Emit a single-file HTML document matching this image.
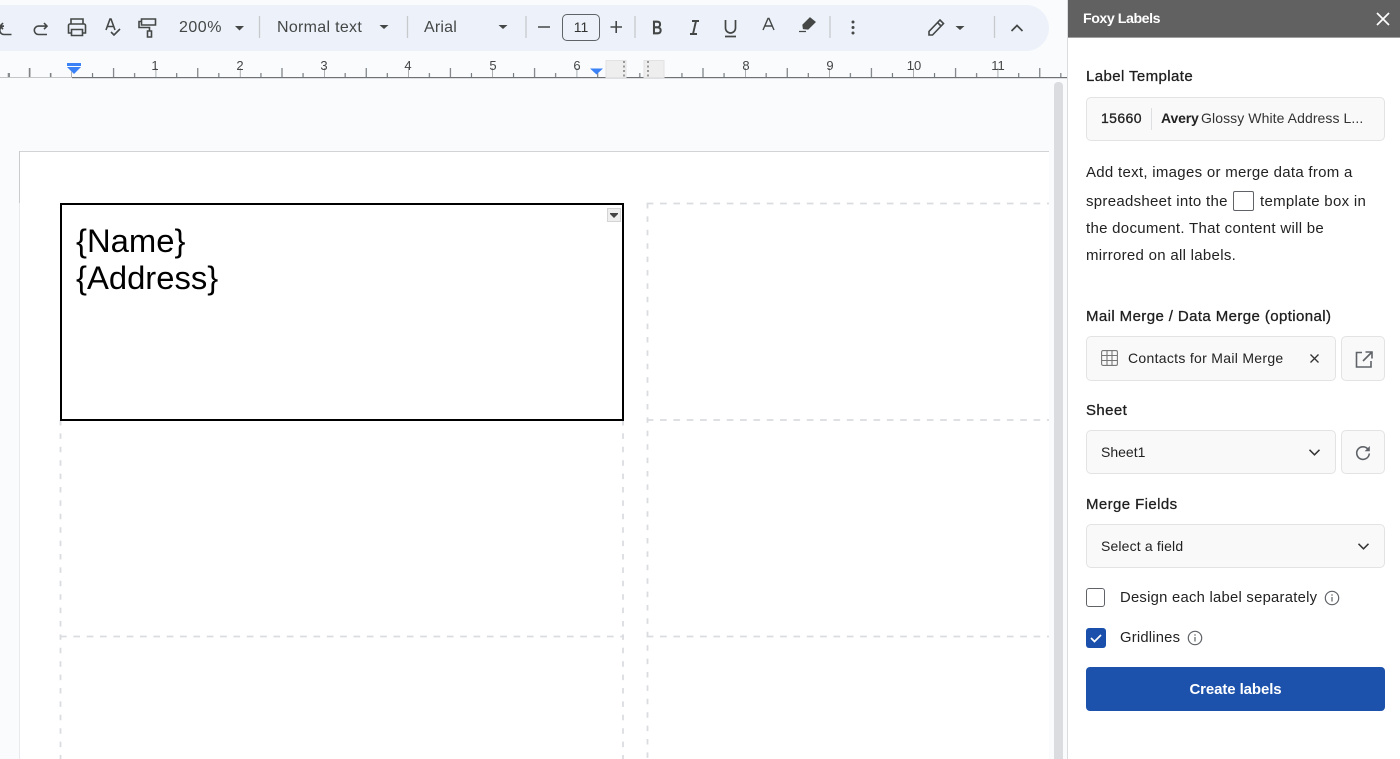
<!DOCTYPE html>
<html><head><meta charset="utf-8"><style>
html,body{margin:0;padding:0;background:#f9fbfd}
body{width:1400px;height:759px;position:relative;overflow:hidden;font-family:"Liberation Sans",Arial,sans-serif;color:#202124}
.t{position:absolute;white-space:nowrap;line-height:20px}
.b{position:absolute;box-sizing:border-box;background:#f9f9f9;border:1.5px solid #e3e3e3;border-radius:5px}
svg{position:absolute;overflow:visible}
.lbl{font-size:15px;letter-spacing:.4px;color:#1f1f1f;-webkit-text-stroke:.3px #1f1f1f}
.s{font-size:15px;letter-spacing:.29px;color:#222}
.c{font-size:14px;color:#222}
.tb{font-size:16px;letter-spacing:.2px;color:#444746}
.r{font-size:13px;color:#444746;line-height:14px;position:absolute;width:24px;text-align:center}
</style></head><body>
<!-- toolbar -->
<div style="position:absolute;left:-30px;top:5px;width:1079px;height:46px;background:#edf2fa;border-radius:23px"></div>
<svg style="left:0;top:0" width="1060" height="52" fill="none" stroke="#444746" stroke-width="1.6">
<path d="M11.500 34.500H4a4.200 4.200 0 0 1 0-8.400h-4M3 23l-3 3.100 3 3.100"/>
<path d="M47 34.500h-8.500a4.200 4.200 0 0 1 0-8.400h8.500M44 23l3 3.100-3 3.100"/>
<path d="M71 24v-5h12v5M71 33h-2.500v-7.500a1.500 1.500 0 0 1 1.500-1.500h14a1.500 1.500 0 0 1 1.500 1.500v7.500h-2.500M71.500 29.500h11v6h-11z"/>
<path d="M106 30l4-11h1l4 11M107.300 26.500h6.400M111 32l3 3 6-6"/>
<path d="M141.500 19h14v6h-14zM141 21.500h-2v6h10.500v3.500M147.500 31h4v6h-4z"/>
<path d="M235 26l4.500 4.500 4.500-4.500z" fill="#444746" stroke="none"/>
<path d="M379.500 25l4.500 4 4.500-4z" fill="#444746" stroke="none"/>
<path d="M498.500 25l4.500 4 4.500-4z" fill="#444746" stroke="none"/>
<path d="M259.500 16v22M407.500 16v22M526 16v22M635 16v22M830 16v22M994.500 16v22" stroke="#c7c9cc" stroke-width="1.300"/>
<path d="M538 27h12M610.500 27h11.500M616.200 21v12" />
<path d="M692 21h7M690 34h7M696 21l-3 13" stroke-width="1.900"/>
<path d="M725.500 20v8a5 5 0 0 0 10 0v-8M725 36.500h11" stroke-width="1.700"/>
<path d="M763 30l5-11.500h1l5 11.500M765 26h7.500" stroke-width="1.400"/>
<path d="M803 25l7-7 5 4-7 7-4.500-.5zM799 31.500h7" stroke-width="1.300" fill="#444746"/>
<circle cx="853" cy="22" r="1.500" fill="#444746" stroke="none"/><circle cx="853" cy="27.500" r="1.500" fill="#444746" stroke="none"/><circle cx="853" cy="33" r="1.500" fill="#444746" stroke="none"/>
<path d="M929 35v-3.500l11-11.500 3.500 3.500-11 11.500zM937.500 22.500l3.500 3.500" stroke-width="1.600"/>
<path d="M955.500 26l4.500 4 4.500-4z" fill="#444746" stroke="none"/>
<path d="M1011.500 31l5.500-5.500 5.500 5.500" stroke-width="1.700"/>
</svg>
<div class="t" style="left:652px;top:18px;font-size:18px;color:#444746;-webkit-text-stroke:.7px #444746;transform:scaleX(.85);transform-origin:left">B</div>
<div class="t tb" style="left:179px;top:18px;letter-spacing:.5px">200%</div>
<div class="t tb" style="left:277px;top:17.500px;letter-spacing:.3px">Normal text</div>
<div class="t tb" style="left:424px;top:17.500px">Arial</div>
<div style="position:absolute;left:562px;top:14px;width:38px;height:27px;box-sizing:border-box;border:1.3px solid #5f6368;border-radius:5px;font-size:14px;line-height:25px;text-align:center;color:#333">11</div>
<!-- ruler -->
<div style="position:absolute;left:0;top:51px;width:1068px;height:28px;background:#f9fbfd"></div>
<svg style="left:0;top:51px" width="1068" height="28">
<defs><pattern id="tk" x="71.500" y="0" width="84.200" height="28" patternUnits="userSpaceOnUse">
<path d="M0 17v9M21.050 22v4M42.100 17v9M63.150 22v4" stroke="#5f6368" stroke-width="1" fill="none"/></pattern></defs>
<rect x="0" y="0" width="1068" height="28" fill="url(#tk)"/>
<path d="M9.500 22v4M30 17v9M51 22v4" stroke="#8a8d90" fill="none"/>
<rect x="0" y="26" width="72" height="1" fill="#c4c7c5"/>
<rect x="72" y="26" width="996" height="1.200" fill="#6f7275"/>
<rect x="67" y="12" width="14" height="3" fill="#3b82f6"/>
<path d="M67 16h14l-7 7z" fill="#3b82f6"/>
<path d="M590 17.500h13l-6.500 6z" fill="#3b82f6"/>
<rect x="606" y="9.500" width="20" height="17" fill="#eeeeee" stroke="#e2e2e2"/>
<rect x="644" y="9.500" width="20" height="17" fill="#eeeeee" stroke="#e2e2e2"/>
<path d="M624 10v16M648 10v16" stroke="#444" stroke-dasharray="2 2.500" fill="none"/>
</svg>
<div class="r" style="left:143px;top:59px">1</div>
<div class="r" style="left:228px;top:59px">2</div>
<div class="r" style="left:312px;top:59px">3</div>
<div class="r" style="left:396px;top:59px">4</div>
<div class="r" style="left:481px;top:59px">5</div>
<div class="r" style="left:565px;top:59px">6</div>
<div class="r" style="left:734px;top:59px">8</div>
<div class="r" style="left:818px;top:59px">9</div>
<div class="r" style="left:902px;top:59px">10</div>
<div class="r" style="left:986px;top:59px">11</div>
<!-- page -->
<div style="position:absolute;left:19px;top:151px;width:1030px;height:608px;background:#fff;border-top:1.500px solid #d1d3d5;box-sizing:border-box"></div>
<div style="position:absolute;left:19px;top:151px;width:1px;height:52px;background:#c9cbcd"></div>
<div style="position:absolute;left:19px;top:203px;width:1px;height:556px;background:#e8eaed"></div>
<svg style="left:0;top:0" width="1060" height="759" fill="none" stroke="#dadce0" stroke-width="1.800">
<path d="M647.500 203v556M60.500 420v339M623 420v339" stroke-dasharray="5.500 7.900"/>
<path d="M646.700 203.500h402.300M646.700 420h402.300M646.700 636.500h402.300M60 636.500h564" stroke-dasharray="6.670 6.670"/>
</svg>
<div style="position:absolute;left:60px;top:203px;width:564px;height:218px;box-sizing:border-box;border:2px solid #000;background:#fff"></div>
<div style="position:absolute;left:607px;top:208px;width:14px;height:14px;box-sizing:border-box;background:#eee;border:1px solid #d4d4d4"></div>
<svg style="left:607px;top:208px" width="14" height="14"><path d="M3 5h8v1l-4 4-4-4z" fill="#444"/></svg>
<div class="t" style="left:76px;top:222px;font-size:32.800px;line-height:37px;color:#000">{Name}<br>{Address}</div>
<!-- scrollbar -->
<div style="position:absolute;left:1049px;top:79px;width:19px;height:680px;background:#f9fbfd"></div>
<div style="position:absolute;left:1054px;top:82px;width:9px;height:677px;background:#dadce0;border-radius:4px 4px 0 0"></div>
<!-- sidebar -->
<div style="position:absolute;left:1067px;top:0;width:333px;height:759px;background:#fff;border-left:1px solid #dadce0;box-sizing:border-box"></div>
<div style="position:absolute;left:1068px;top:0;width:332px;height:38px;background:#616161;border-bottom:1px solid #9e9e9e;box-sizing:border-box"></div>
<div class="t" style="left:1083px;top:9px;font-size:14.200px;letter-spacing:-.45px;font-weight:bold;color:#fff">Foxy Labels</div>
<svg style="left:1376px;top:12px" width="14" height="14"><path d="M1 1l12 12M13 1L1 13" stroke="#fff" stroke-width="1.700" fill="none"/></svg>
<div class="t lbl" style="left:1086px;top:67px">Label Template</div>
<div class="b" style="left:1086px;top:97px;width:299px;height:44px"></div>
<div class="t c" style="left:1101px;top:108px;letter-spacing:.4px;-webkit-text-stroke:.3px #222">15660</div>
<div style="position:absolute;left:1151px;top:108px;width:1px;height:22px;background:#dedfe1"></div>
<div class="t c" style="left:1161px;top:108px"><b style="letter-spacing:-.15px">Avery</b> <span style="color:#333;margin-left:-1.500px;letter-spacing:.08px">Glossy White Address L...</span></div>
<div class="t s" style="left:1086px;top:163px">Add text, images or merge data from a</div>
<div class="t s" style="left:1086px;top:192px">spreadsheet into the</div>
<div style="position:absolute;left:1233px;top:191px;width:21px;height:20px;box-sizing:border-box;border:1px solid #5f6368;border-radius:2px"></div>
<div class="t s" style="left:1260px;top:192px">template box in</div>
<div class="t s" style="left:1086px;top:219px">the document. That content will be</div>
<div class="t s" style="left:1086px;top:246px">mirrored on all labels.</div>
<div class="t lbl" style="left:1086px;top:306.500px">Mail Merge / Data Merge (optional)</div>
<div class="b" style="left:1086px;top:336px;width:250px;height:45px"></div>
<svg style="left:1101px;top:350px" width="17" height="16" fill="none" stroke="#777" stroke-width="1.100"><path d="M2 .6h13a1.400 1.400 0 0 1 1.400 1.400v12a1.400 1.400 0 0 1-1.400 1.400h-13a1.400 1.400 0 0 1-1.400-1.400v-12a1.400 1.400 0 0 1 1.400-1.400zM.6 5.500h15.800M.6 10.500h15.800M6 .6v14.800M11 .6v14.800"/></svg>
<div class="t c" style="left:1128px;top:348px;letter-spacing:.3px">Contacts for Mail Merge</div>
<svg style="left:1309px;top:353px" width="11" height="11"><path d="M1.500 1.500l8 8M9.500 1.500l-8 8" stroke="#333" stroke-width="1.300" fill="none"/></svg>
<div class="b" style="left:1341px;top:336px;width:44px;height:45px"></div>
<svg style="left:1355px;top:351px" width="18" height="17" fill="none" stroke="#5f6368" stroke-width="1.600"><path d="M7 1.500h-5.500v14.500h14.500v-6M10.500 1h6.500v6.500M17 1l-9 9"/></svg>
<div class="t lbl" style="left:1086px;top:400.500px">Sheet</div>
<div class="b" style="left:1086px;top:430px;width:250px;height:44px"></div>
<div class="t c" style="left:1101px;top:442px">Sheet1</div>
<svg style="left:1308px;top:448px" width="13" height="9"><path d="M1.500 1.800l5 5 5-5" stroke="#333" stroke-width="1.500" fill="none"/></svg>
<div class="b" style="left:1341px;top:430px;width:44px;height:44px"></div>
<svg style="left:1355px;top:445px" width="16" height="16" fill="none" stroke="#5f6368" stroke-width="1.600"><path d="M13.200 4.500a6.300 6.300 0 1 0 1.100 4"/><path d="M14.800 1v5.200h-5.200z" fill="#5f6368" stroke="none"/></svg>
<div class="t lbl" style="left:1086px;top:494.500px">Merge Fields</div>
<div class="b" style="left:1086px;top:524px;width:299px;height:44px"></div>
<div class="t c" style="left:1101px;top:535.500px;letter-spacing:.15px">Select a field</div>
<svg style="left:1357px;top:542px" width="13" height="9"><path d="M1.500 1.800l5 5 5-5" stroke="#333" stroke-width="1.500" fill="none"/></svg>
<div style="position:absolute;left:1086px;top:588px;width:19px;height:19px;box-sizing:border-box;border:1.500px solid #5f6368;border-radius:3px"></div>
<div class="t" style="left:1120px;top:588px;font-size:14.800px;letter-spacing:.26px;color:#222">Design each label separately</div>
<svg style="left:1324px;top:590px" width="16" height="16" fill="none" stroke="#5f6368" stroke-width="1.200"><circle cx="8" cy="8" r="6.700"/><path d="M8 7v4.500M8 4.300v1.400"/></svg>
<div style="position:absolute;left:1086px;top:628px;width:20px;height:20px;box-sizing:border-box;background:#1a50ab;border-radius:3px"></div>
<svg style="left:1086px;top:628px" width="20" height="20"><path d="M5 10l3.500 3.500 6.500-6.500" stroke="#fff" stroke-width="1.700" fill="none"/></svg>
<div class="t" style="left:1120px;top:628px;font-size:14.800px;letter-spacing:.2px;color:#222">Gridlines</div>
<svg style="left:1187px;top:630px" width="16" height="16" fill="none" stroke="#5f6368" stroke-width="1.200"><circle cx="8" cy="8" r="6.700"/><path d="M8 7v4.500M8 4.300v1.400"/></svg>
<div style="position:absolute;left:1086px;top:667px;width:299px;height:44px;background:#1c52ab;border-radius:4px;color:#fff;font-size:15px;letter-spacing:-.1px;font-weight:bold;line-height:45px;text-align:center">Create labels</div>
</body></html>
